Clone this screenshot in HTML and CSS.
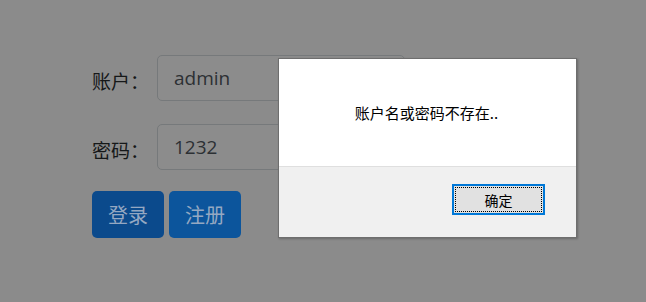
FILE: index.html
```html
<!DOCTYPE html>
<html lang="zh">
<head>
<meta charset="utf-8">
<link rel="stylesheet" href="styles.css">
</head>
<body>
<div class="page">
  <form class="login">
    <div class="row">
      <label class="label">账户：</label>
      <div class="input">admin</div>
    </div>
    <div class="row">
      <label class="label">密码：</label>
      <div class="input">1232</div>
    </div>
    <div class="actions">
      <div class="btn btn-login">登录</div>
      <div class="btn btn-reg">注册</div>
    </div>
  </form>
</div>
<div class="dialog">
  <div class="dialog-body">账户名或密码不存在..</div>
  <div class="dialog-foot">
    <div class="ok"><span class="ok-inner">确定</span></div>
  </div>
</div>
</body>
</html>
```
FILE: styles.css
```css
html, body {
  margin: 0;
  padding: 0;
  background: #8b8b8b;
  width: 646px;
  height: 302px;
  overflow: hidden;
  font-family: "Noto Sans CJK SC", sans-serif;
}
.page {
  padding: 55px 0 0 92px;
}
.login {
  display: flex;
  flex-direction: column;
}
.row {
  display: flex;
  align-items: center;
  height: 46px;
  margin-bottom: 23px;
}
.row + .row {
  margin-bottom: 21px;
}
.label {
  width: 65px;
  font-size: 19px;
  color: #161819;
  padding-top: 5px;
  letter-spacing: 0;
}
.input {
  box-sizing: border-box;
  width: 248px;
  height: 46px;
  border: 1px solid #76797b;
  border-radius: 5px;
  background: #8c8c8c;
  color: #2c3034;
  font-family: "Open Sans", "Noto Sans", sans-serif;
  font-size: 19px;
  line-height: 44px;
  padding-left: 16px;
}
.actions {
  display: flex;
  gap: 5px;
}
.btn {
  width: 72px;
  height: 47px;
  border-radius: 5px;
  display: flex;
  align-items: center;
  justify-content: center;
  font-size: 20px;
  color: #95a8c2;
}
.btn-login {
  background: #0b4a8c;
}
.btn-reg {
  background: #0c559c;
}
.dialog {
  position: absolute;
  left: 278px;
  top: 58px;
  width: 297px;
  height: 178px;
  border: 1px solid #6e6e6e;
  background: #fff;
  display: flex;
  flex-direction: column;
  box-shadow: 1px 1px 2px rgba(0,0,0,0.25);
}
.dialog-body {
  height: 107px;
  box-sizing: border-box;
  padding-top: 43px;
  text-align: center;
  font-size: 15px;
  color: #000;
  line-height: 22px;
  padding-right: 2px;
}
.dialog-foot {
  flex: 1;
  background: #f0f0f0;
  border-top: 1px solid #dfdfdf;
  display: flex;
  justify-content: flex-end;
  align-items: flex-start;
  padding: 17px 31px 0 0;
}
.ok {
  box-sizing: border-box;
  width: 93px;
  height: 31px;
  border: 2px solid #0078d7;
  background: #e1e1e1;
  padding: 1px;
  display: flex;
}
.ok-inner {
  flex: 1;
  border: 1px dotted #000;
  display: flex;
  align-items: center;
  justify-content: center;
  font-size: 14px;
  color: #000;
}
```
